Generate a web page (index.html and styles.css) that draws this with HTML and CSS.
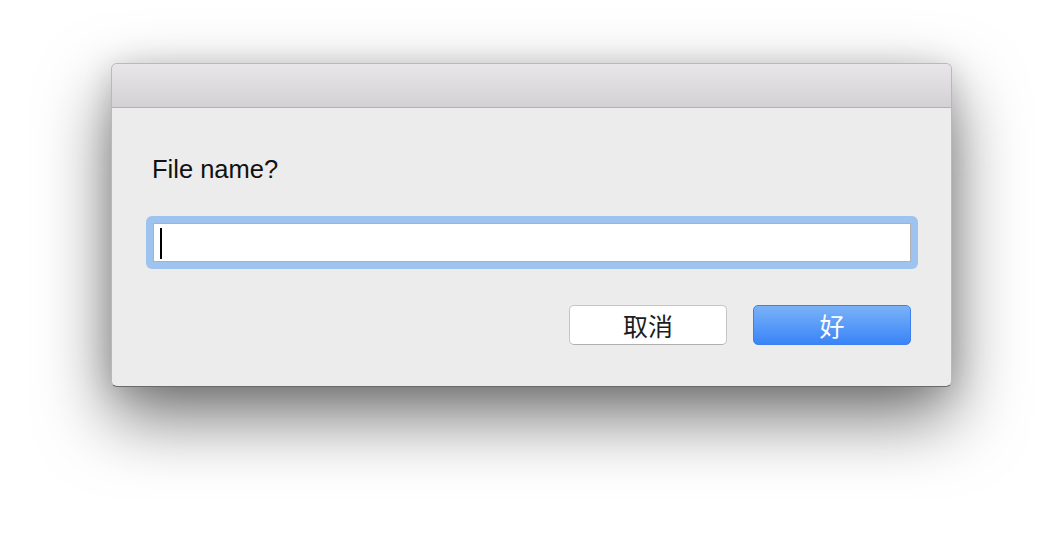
FILE: index.html
```html
<!DOCTYPE html>
<html>
<head>
<meta charset="utf-8">
<link rel="stylesheet" href="styles.css">
</head>
<body>
<div class="window">
  <div class="titlebar"></div>
  <div class="content">
    <div class="label">File name?</div>
    <div class="ring">
      <div class="field"><span class="caret"></span></div>
    </div>
    <div class="buttons">
      <div class="btn cancel">取消</div>
      <div class="btn ok">好</div>
    </div>
  </div>
</div>
</body>
</html>
```
FILE: styles.css
```css
html, body {
  margin: 0;
  padding: 0;
  background: #ffffff;
  width: 1064px;
  height: 546px;
  overflow: hidden;
}
.window {
  margin: 63px 0 0 111px;
  width: 841px;
  height: 324px;
  box-sizing: border-box;
  border: 1px solid #b9b9b9;
  border-bottom-color: #6a6a6a;
  border-radius: 6px;
  background: #ececec;
  overflow: hidden;
  display: flex;
  flex-direction: column;
  box-shadow: 0 30px 70px rgba(0,0,0,0.55), 0 4px 30px rgba(0,0,0,0.14);
}
.titlebar {
  height: 43px;
  flex: none;
  background: linear-gradient(#e8e6e8, #d3d1d3);
  border-bottom: 1px solid #b3b1b3;
}
.content {
  padding: 46px 33px 0 34px;
  display: flex;
  flex-direction: column;
}
.label {
  font-family: "Liberation Sans", Arial, sans-serif;
  font-size: 25.5px;
  line-height: 30px;
  color: #111;
  margin-left: 6px;
}
.ring {
  margin-top: 32px;
  background: #9fc3ef;
  border-radius: 6px;
  padding: 7px;
}
.field {
  height: 39px;
  box-sizing: border-box;
  background: #fff;
  border: 1px solid #b1b1b1;
  padding: 4px 0 0 6px;
}
.caret {
  display: block;
  width: 2px;
  height: 31px;
  background: #000;
}
.buttons {
  margin-top: 36px;
  margin-right: 7px;
  display: flex;
  justify-content: flex-end;
  gap: 26px;
}
.btn {
  width: 158px;
  height: 40px;
  box-sizing: border-box;
  border-radius: 5px;
  display: flex;
  align-items: center;
  justify-content: center;
  font-family: "Noto Sans CJK SC", "Liberation Sans", sans-serif;
  font-size: 25px;
  line-height: 1;
}
.cancel {
  background: #fff;
  border: 1px solid #c5c5c5;
  border-bottom-color: #b0b0b0;
  color: #1c1c1c;
}
.ok {
  background: linear-gradient(#7ab2f8, #3a84f7);
  border: 1px solid #3c80ef;
  color: #fff;
}
```
